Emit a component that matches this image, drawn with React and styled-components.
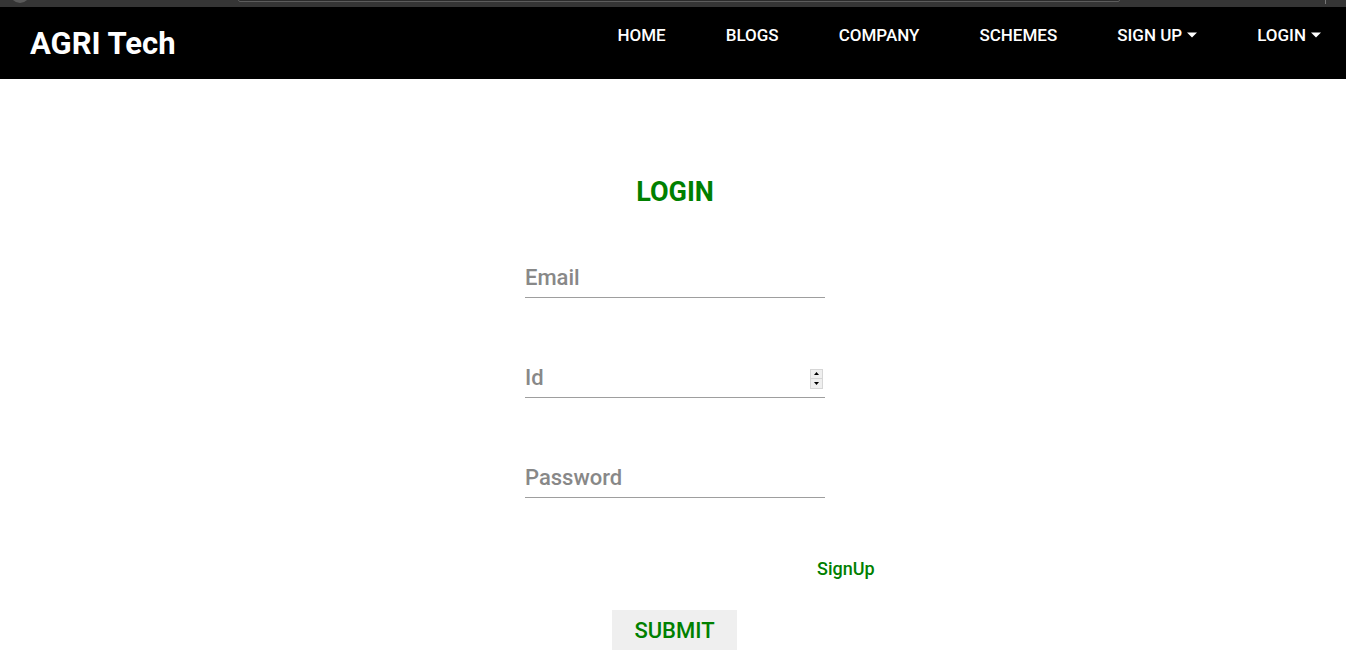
import React from "react";
import styled, { createGlobalStyle } from "styled-components";

const GlobalStyle = createGlobalStyle`
body {
  margin: 0;
  background: #fff;
  font-family: Roboto, "Liberation Sans", sans-serif;
}
* { box-sizing: border-box; }
`;

const ChromeStrip = styled.div`
height: 7px;
background-color: #353535;
display: flex;
align-items: flex-start;
overflow: hidden;
`;

const ChromeDot = styled.div`
width: 20px;
height: 20px;
margin: -17px 0 0 10px;
border-radius: 50%;
background-color: #5a5a5a;
`;

const AddressBar = styled.div`
width: 882px;
height: 12px;
margin: -10px 0 0 208px;
border: 1px solid #5c5c5c;
border-radius: 2px;
background-color: #2b2b2b;
`;

const ChromeDivider = styled.div`
width: 1px;
height: 4px;
margin-left: 205px;
background-color: #777;
`;

const Navbar = styled.header`
height: 72px;
background-color: #000;
display: flex;
align-items: center;
justify-content: space-between;
`;

const Brand = styled.a`
padding-left: 30px;
color: #fff;
font-size: 31px;
font-weight: 700;
line-height: 1;
text-decoration: none;
margin-top: 1px;
`;

const NavList = styled.ul`
align-self: flex-start;
display: flex;
list-style: none;
margin: 0;
padding: 0;
`;

const NavItem = styled.li`
display: block;
`;

const NavLink = styled.a`
display: flex;
align-items: center;
gap: 5px;
padding: 18px ${(p) => (p.$end ? "25px" : "30px")} 18px 30px;
color: #fff;
font-size: 17px;
font-weight: 500;
line-height: 20px;
text-transform: uppercase;
text-decoration: none;
`;

const Caret = () => (
  <svg width="10" height="6" viewBox="0 0 10 6">
    <path d="M0 0.5h10L5 5.5z" fill="#fff" />
  </svg>
);

const Main = styled.main`
width: 304px;
margin: 0 auto;
padding: 97px 0 0 4px;
display: flex;
flex-direction: column;
`;

const Title = styled.h2`
margin: 0 0 54px;
color: #008000;
font-size: 27px;
font-weight: 700;
line-height: 32px;
text-align: center;
`;

const Field = styled.div`
display: flex;
align-items: center;
height: 36px;
margin-bottom: ${(p) => (p.$last ? "61px" : "64px")};
border-bottom: 1px solid #9e9e9e;
`;

const Input = styled.input`
flex: 1;
min-width: 0;
border: none;
outline: none;
background: transparent;
padding: 3px 0 6px;
font-family: Roboto, "Liberation Sans", sans-serif;
font-size: 22px;
line-height: 26px;
color: #333;
&::placeholder {
  color: #888;
  font-weight: 500;
}
`;

const Spinner = styled.div`
width: 13px;
height: 20px;
margin: 0 2px 2px 0;
display: flex;
flex-direction: column;
gap: 1px;
border: 1px solid #d6d6d6;
background-color: #d6d6d6;
`;

const SpinButton = styled.div`
flex: 1;
display: flex;
align-items: center;
justify-content: center;
background-color: #efefef;
`;

const SpinArrow = ({ up }) => (
  <svg width="5" height="3" viewBox="0 0 5 3">
    <path d={up ? "M0 3h5L2.5 0z" : "M0 0h5L2.5 3z"} fill="#000" />
  </svg>
);

const LinkRow = styled.div`
display: flex;
padding-left: 292px;
margin-bottom: 31px;
`;

const SignUpLink = styled.a`
color: #008000;
font-size: 18px;
font-weight: 500;
line-height: 20px;
text-decoration: none;
white-space: nowrap;
`;

const SubmitButton = styled.button`
align-self: center;
width: 125px;
height: 40px;
margin-left: -1px;
border: none;
background-color: #efefef;
color: #008000;
font-family: Roboto, "Liberation Sans", sans-serif;
font-size: 22px;
font-weight: 500;
text-transform: uppercase;
`;

const navItems = [
  { label: "Home" },
  { label: "Blogs" },
  { label: "Company" },
  { label: "Schemes" },
  { label: "Sign Up", dropdown: true },
  { label: "Login", dropdown: true },
];

export default function App() {
  return (
    <>
      <GlobalStyle />
      <ChromeStrip>
        <ChromeDot />
        <AddressBar />
        <ChromeDivider />
      </ChromeStrip>
      <Navbar>
        <Brand href="#">AGRI Tech</Brand>
        <NavList>
          {navItems.map((item, i) => (
            <NavItem key={item.label}>
              <NavLink href="#" $end={i === navItems.length - 1}>
                {item.label}
                {item.dropdown && <Caret />}
              </NavLink>
            </NavItem>
          ))}
        </NavList>
      </Navbar>
      <Main>
        <Title>LOGIN</Title>
        <Field>
          <Input type="email" placeholder="Email" />
        </Field>
        <Field>
          <Input type="text" placeholder="Id" />
          <Spinner>
            <SpinButton><SpinArrow up /></SpinButton>
            <SpinButton><SpinArrow /></SpinButton>
          </Spinner>
        </Field>
        <Field $last>
          <Input type="password" placeholder="Password" />
        </Field>
        <LinkRow>
          <SignUpLink href="#">SignUp</SignUpLink>
        </LinkRow>
        <SubmitButton>Submit</SubmitButton>
      </Main>
    </>
  );
}
